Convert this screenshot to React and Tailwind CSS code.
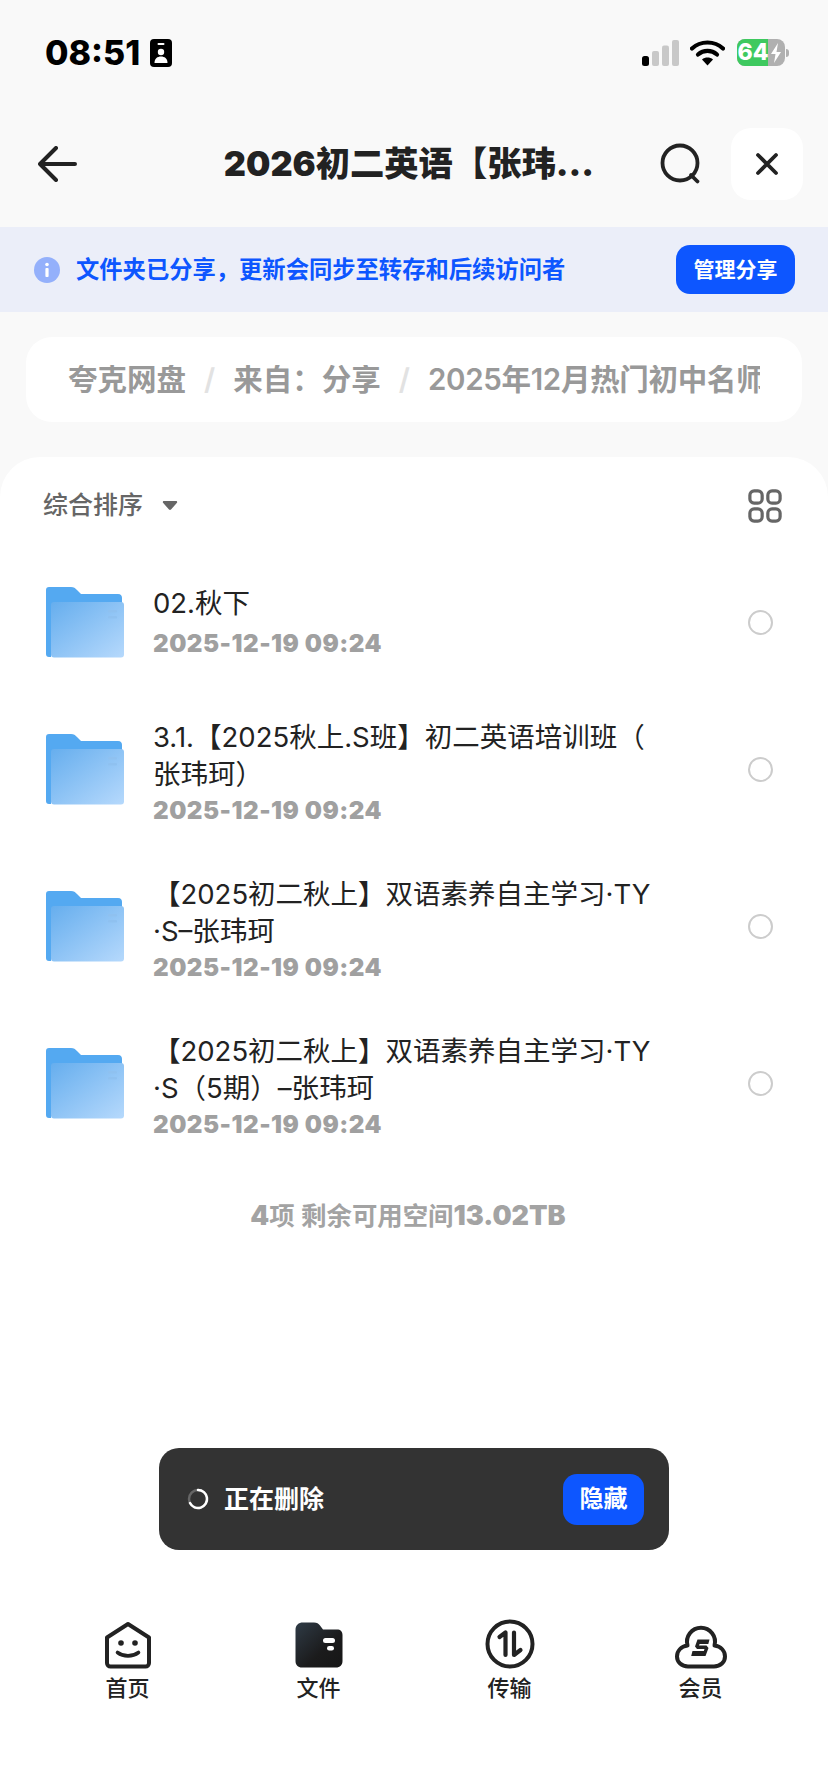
import React from "react";

const files = [
  { name: "02.秋下", date: "2025-12-19 09:24", rowClass: "h-[137px]", textClass: "mt-[2px]", dateClass: "mt-[5px]" },
  { name: "3.1.【2025秋上.S班】初二英语培训班（\n张玮珂）", date: "2025-12-19 09:24", rowClass: "h-[157px]", textClass: "mt-[8px]", dateClass: "mt-[1px]" },
  { name: "【2025初二秋上】双语素养自主学习·TY\n·S–张玮珂", date: "2025-12-19 09:24", rowClass: "h-[157px]", textClass: "mt-[8px]", dateClass: "mt-[1px]" },
  { name: "【2025初二秋上】双语素养自主学习·TY\n·S（5期）–张玮珂", date: "2025-12-19 09:24", rowClass: "h-[157px]", textClass: "mt-[8px]", dateClass: "mt-[1px]" },
];

function FolderIcon() {
  return (
    <svg width="78" height="71" viewBox="0 0 78 71" className="shrink-0">
      <defs>
        <linearGradient id="folderFront" x1="0" y1="0" x2="1" y2="1">
          <stop offset="0" stopColor="#66aeee" />
          <stop offset="1" stopColor="#b6d9fc" />
        </linearGradient>
      </defs>
      <path d="M3 0h22c3 0 4 1 6 3l4 4h37c3 0 4 2 4 4v50H5v9H3c-2 0-3-1-3-3V3c0-2 1-3 3-3z" fill="#54a9f1" />
      <rect x="5" y="15" width="73" height="55.5" rx="3" fill="url(#folderFront)" />
      <rect x="62" y="23" width="9" height="2.5" rx="1" fill="#8fc1f0" />
      <rect x="62" y="29" width="9" height="2.5" rx="1" fill="#8fc1f0" />
    </svg>
  );
}

function StatusIcons() {
  return (
    <div className="flex items-center">
      <svg width="37" height="26" viewBox="0 0 37 26" className="mr-[11px]">
        <rect x="0" y="16" width="7" height="10" rx="2.5" fill="#000" />
        <rect x="10" y="11" width="7" height="15" rx="2" fill="#c8c8c8" />
        <rect x="20" y="5.5" width="7" height="20.5" rx="2" fill="#c8c8c8" />
        <rect x="30" y="0" width="7" height="26" rx="2" fill="#c8c8c8" />
      </svg>
      <svg width="35" height="26" viewBox="0 0 35 26" className="mr-[12px]">
        <path d="M2 8.5C10.5.5 24.5.5 33 8.5" fill="none" stroke="#000" strokeWidth="4.2" strokeLinecap="round" />
        <path d="M8 14.5c5.5-4.8 13.5-4.8 19 0" fill="none" stroke="#000" strokeWidth="4.2" strokeLinecap="round" />
        <path d="M12 19.5c3.2-2.6 7.8-2.6 11 0L17.5 25.5z" fill="#000" />
      </svg>
      <div className="relative flex h-[27px] w-[48px] overflow-hidden rounded-[8px] bg-[#b0b0b0]">
        <div className="flex h-full w-[31px] items-center justify-center bg-[#3ec95f] pl-[1px] text-[23px] font-extrabold leading-none text-white">64</div>
        <svg width="14" height="22" viewBox="0 0 14 22" className="ml-[1px] mt-[3px]">
          <path d="M9 1 2 12h4.5L5 21l7-11H7.5z" fill="#fff" />
        </svg>
      </div>
      <div className="ml-[1px] h-[8px] w-[3px] rounded-r-full bg-[#b0b0b0]" />
    </div>
  );
}

function TabIcon({ name }) {
  if (name === "home") {
    return (
      <svg width="48" height="48" viewBox="0 0 48 48">
        <path d="M24 3 45 16.5V42a3.5 3.5 0 0 1-3.5 3.5h-35A3.5 3.5 0 0 1 3 42V16.5z" fill="none" stroke="#222" strokeWidth="4" strokeLinejoin="round" />
        <circle cx="17" cy="22" r="2.8" fill="#222" />
        <circle cx="31" cy="22" r="2.8" fill="#222" />
        <path d="M13.5 31.5c6 4.5 15 4.5 21 0" fill="none" stroke="#222" strokeWidth="3.6" strokeLinecap="round" />
      </svg>
    );
  }
  if (name === "files") {
    return (
      <svg width="48" height="48" viewBox="0 0 48 48">
        <defs>
          <linearGradient id="tabFolder" x1="0" y1="0" x2="1" y2="1">
            <stop offset="0" stopColor="#2f3b46" />
            <stop offset="0.6" stopColor="#1b1b1c" />
            <stop offset="1" stopColor="#161616" />
          </linearGradient>
        </defs>
        <path d="M8 1.5h11c3 0 4.5 1 6 3l3 4h14c3.5 0 5.5 2 5.5 5.5v26c0 4-2.5 6.5-6.5 6.5H7c-4 0-6.5-2.5-6.5-6.5V9C.5 4 3.5 1.5 8 1.5z" fill="url(#tabFolder)" />
        <rect x="28" y="17" width="12" height="5" rx="2.5" fill="#fff" />
        <rect x="32" y="25" width="7" height="4.5" rx="2.2" fill="#fff" />
      </svg>
    );
  }
  if (name === "transfer") {
    return (
      <svg width="50" height="50" viewBox="0 0 50 50">
        <circle cx="25" cy="25" r="22.5" fill="none" stroke="#222" strokeWidth="4" />
        <path d="M14.5 18 20.5 13.5V36" fill="none" stroke="#222" strokeWidth="4.2" strokeLinecap="round" strokeLinejoin="round" />
        <path d="M29 13.5V36L35.5 31" fill="none" stroke="#222" strokeWidth="4.2" strokeLinecap="round" strokeLinejoin="round" />
      </svg>
    );
  }
  return (
    <svg width="52" height="44" viewBox="0 0 52 44">
      <path d="M13 41.5C6.5 41.5 2 37 2 31.5c0-5.5 4-10 10.5-11A14 14 0 1 1 39.5 20.5C46 21.5 50 26 50 31.5c0 5.5-4.5 10-11 10z" fill="none" stroke="#222" strokeWidth="4" strokeLinejoin="round" />
      <path d="M34.5 14.5H22.5l-2.5 7 2 2.5h7.5l-.7 2H17.5L16.2 31h14.3l3-8-2-2.5h-7.5l.6-1.5h8.7z" fill="#222" />
    </svg>
  );
}

export default function App() {
  return (
    <div className="relative flex h-[1792px] w-[828px] flex-col overflow-hidden bg-[#f9f9f9] font-[Inter,'Noto_Sans_CJK_SC',sans-serif] text-[#222]">
      {/* 状态栏 */}
      <div className="flex h-[101px] items-start justify-between pl-[45px] pr-[39px] pt-[39px]">
        <div className="flex items-center">
          <span className="text-[34px] font-extrabold leading-[28px] text-black">08:51</span>
          <svg width="22" height="28" viewBox="0 0 22 28" className="ml-[10px]">
            <rect width="22" height="28" rx="4" fill="#000" />
            <rect x="7.5" y="4" width="7" height="2" rx="1" fill="#fff" />
            <circle cx="11" cy="13" r="3.2" fill="#fff" />
            <path d="M4.5 24c0-4.5 3-6.5 6.5-6.5s6.5 2 6.5 6.5z" fill="#fff" />
          </svg>
        </div>
        <StatusIcons />
      </div>

      {/* 标题栏 */}
      <div className="flex h-[126px] items-center pl-[38px] pr-[25px]">
        <svg width="39" height="36" viewBox="0 0 39 36" className="shrink-0">
          <path d="M18 2 2 18l16 16M2 18h35" fill="none" stroke="#222" strokeWidth="4" strokeLinecap="round" strokeLinejoin="round" />
        </svg>
        <div className="flex-1 pl-[81px] text-center text-[34.3px] font-black leading-none">2026初二英语【张玮...</div>
        <svg width="42" height="42" viewBox="0 0 42 42" className="shrink-0">
          <circle cx="20" cy="20" r="17.5" fill="none" stroke="#222" strokeWidth="3.8" />
          <path d="M31 32l6.5 6.5" fill="none" stroke="#222" strokeWidth="3.8" strokeLinecap="round" />
        </svg>
        <div className="ml-[29px] flex h-[72px] w-[72px] shrink-0 items-center justify-center rounded-[20px] bg-white">
          <svg width="24" height="24" viewBox="0 0 24 24">
            <path d="M3 3l18 18M21 3 3 21" fill="none" stroke="#222" strokeWidth="3.8" strokeLinecap="round" />
          </svg>
        </div>
      </div>

      {/* 分享提示 */}
      <div className="flex h-[85px] items-center bg-[#ebeef9] pl-[34px] pr-[33px]">
        <svg width="26" height="26" viewBox="0 0 26 26" className="shrink-0">
          <circle cx="13" cy="13" r="13" fill="#94b0fb" />
          <circle cx="13" cy="7.5" r="1.8" fill="#fff" />
          <rect x="11.4" y="11" width="3.2" height="9" rx="1" fill="#fff" />
        </svg>
        <span className="ml-[16px] flex-1 text-[23.3px] font-semibold leading-none text-[#0d56ff]">文件夹已分享，更新会同步至转存和后续访问者</span>
        <button className="flex h-[49px] w-[119px] items-center justify-center rounded-[14px] bg-[#0d56ff] text-[21px] font-bold text-white">管理分享</button>
      </div>

      {/* 路径 */}
      <div className="mx-[26px] mt-[25px] flex h-[85px] items-center rounded-[26px] bg-white pl-[42px] pr-[42px] text-[#999]">
        <div className="flex w-full items-center overflow-hidden whitespace-nowrap text-[29.5px] font-semibold leading-none">
          <span className="shrink-0">夸克网盘</span>
          <span className="mx-[18px] shrink-0 text-[#e2e2e2]">/</span>
          <span className="shrink-0">来自：分享</span>
          <span className="mx-[18px] shrink-0 text-[#e2e2e2]">/</span>
          <span className="shrink-0 tracking-[-0.3px]">2025年12月热门初中名师</span>
        </div>
      </div>

      {/* 文件列表 */}
      <div className="mt-[35px] flex flex-1 flex-col rounded-t-[40px] bg-white">
        <div className="flex h-[96px] shrink-0 items-center pl-[43px] pr-[46px]">
          <span className="text-[25px] font-medium leading-none text-[#666]">综合排序</span>
          <svg width="16" height="11" viewBox="0 0 16 11" className="ml-[19px]">
            <path d="M2 1h12c1 0 1.5 1 1 1.8L9 9.5c-.5.6-1.5.6-2 0L1 2.8C.5 2 1 1 2 1z" fill="#666" />
          </svg>
          <svg width="34" height="34" viewBox="0 0 36 36" className="ml-auto mt-[2px]">
            <rect x="2" y="2" width="13" height="13" rx="4.5" fill="none" stroke="#666" strokeWidth="3.4" />
            <rect x="21" y="2" width="13" height="13" rx="4.5" fill="none" stroke="#666" strokeWidth="3.4" />
            <rect x="2" y="21" width="13" height="13" rx="4.5" fill="none" stroke="#666" strokeWidth="3.4" />
            <rect x="21" y="21" width="13" height="13" rx="4.5" fill="none" stroke="#666" strokeWidth="3.4" />
          </svg>
        </div>

        {files.map((f) => (
          <div key={f.name} className={`flex shrink-0 items-center pl-[46px] pr-[55px] pt-[1px] ${f.rowClass}`}>
            <FolderIcon />
            <div className={`ml-[29px] w-[510px] ${f.textClass}`}>
              <div className="whitespace-pre-line text-[27.5px] leading-[37px]">{f.name}</div>
              <div className={`text-[24.2px] font-black leading-[34px] tracking-[0.5px] text-[#a0a0a0] ${f.dateClass}`}>{f.date}</div>
            </div>
            <div className="ml-auto h-[25px] w-[25px] rounded-full border-2 border-[#cccccc]" />
          </div>
        ))}

        <div className="mt-[37px] pr-[12px] text-center text-[25.4px] font-semibold leading-[36px] text-[#a3a3a3]">
          <span className="text-[27px] font-black">4</span>项 剩余可用空间<span className="text-[27px] font-black">13.02TB</span>
        </div>

        {/* 底部导航 */}
        <div className="mt-auto mb-[88px] grid grid-cols-4 px-[32px]">
          {[
            { key: "home", label: "首页" },
            { key: "files", label: "文件" },
            { key: "transfer", label: "传输" },
            { key: "vip", label: "会员" },
          ].map((t) => (
            <div key={t.key} className="flex flex-col items-center">
              <div className="flex h-[50px] items-end">
                <TabIcon name={t.key} />
              </div>
              <div className="mt-[3px] text-[22px] font-medium leading-[32px]">{t.label}</div>
            </div>
          ))}
        </div>
      </div>

      {/* 删除提示 */}
      <div className="absolute left-[159px] top-[1448px] flex h-[102px] w-[510px] items-center rounded-[20px] bg-[#333333] pl-[28px] pr-[25px]">
        <svg width="22" height="22" viewBox="0 0 22 22">
          <circle cx="11" cy="11" r="9" fill="none" stroke="#666" strokeWidth="2.5" />
          <path d="M11 2a9 9 0 1 1-8 13" fill="none" stroke="#fff" strokeWidth="2.5" strokeLinecap="round" />
        </svg>
        <span className="ml-[15px] flex-1 text-[25px] font-bold leading-none text-white">正在删除</span>
        <button className="flex h-[51px] w-[81px] items-center justify-center rounded-[14px] bg-[#0d56ff] text-[24px] font-bold text-white">隐藏</button>
      </div>
    </div>
  );
}
